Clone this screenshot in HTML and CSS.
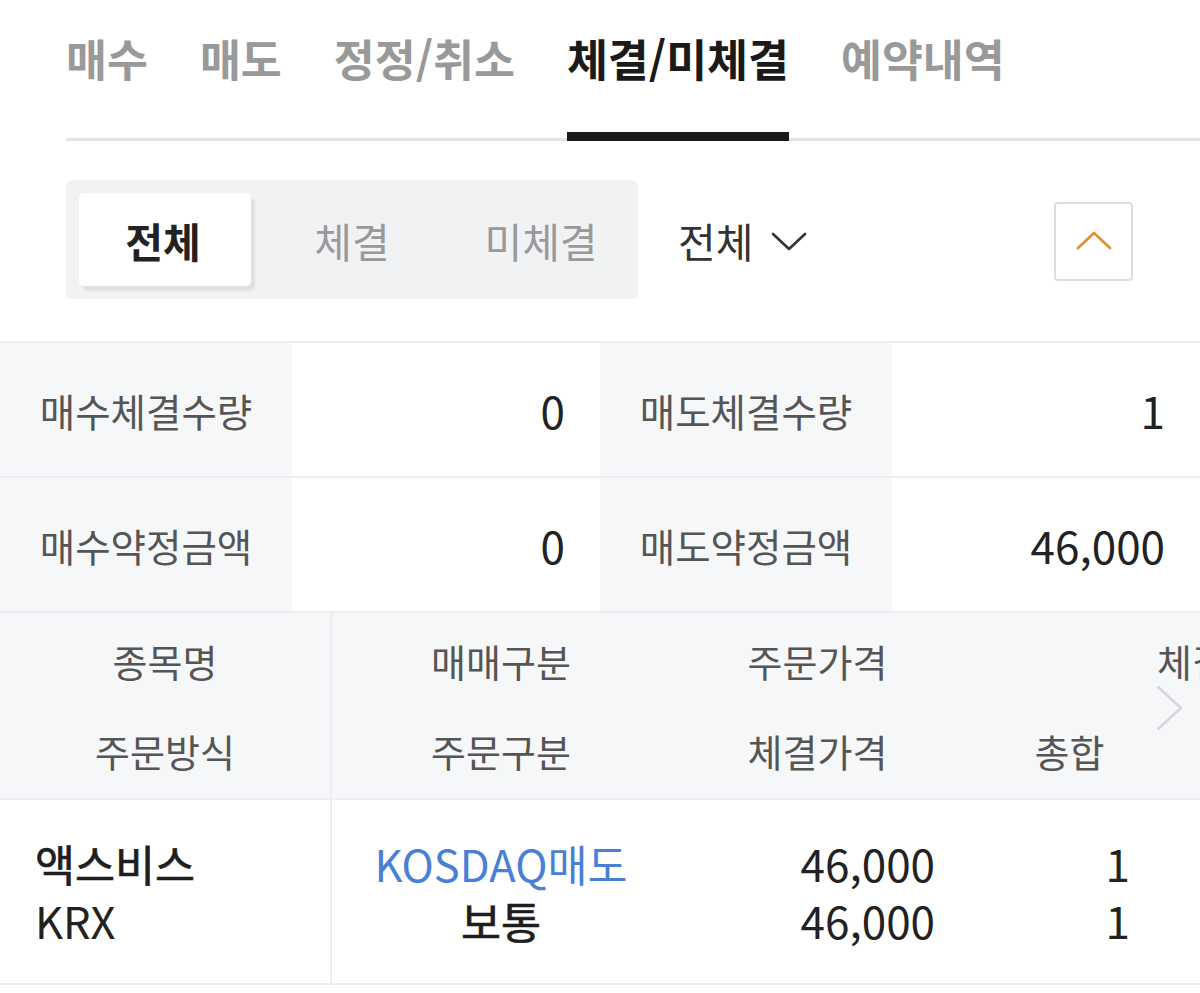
FILE: index.html
```html
<!DOCTYPE html>
<html lang="ko">
<head>
<meta charset="utf-8">
<title>체결/미체결</title>
<link rel="stylesheet" href="styles.css">
</head>
<body>
<div class="page">
  <nav class="tabs">
    <div class="tab">매수</div>
    <div class="tab">매도</div>
    <div class="tab">정정/취소</div>
    <div class="tab active">체결/미체결</div>
    <div class="tab">예약내역</div>
  </nav>

  <div class="filters">
    <div class="seg">
      <div class="seg-item on"><span class="seg-btn">전체</span></div>
      <div class="seg-item">체결</div>
      <div class="seg-item">미체결</div>
    </div>
    <div class="dropdown">
      <span>전체</span>
      <svg class="dd-icon" width="36" height="20" viewBox="0 0 36 20"><path d="M2 2 L18 17 L34 2" fill="none" stroke="#333" stroke-width="2.6" stroke-linecap="round" stroke-linejoin="round"/></svg>
    </div>
    <button class="up-btn" type="button">
      <svg width="36" height="20" viewBox="0 0 36 20"><path d="M2 18 L18 3 L34 18" fill="none" stroke="#e58f34" stroke-width="2.8" stroke-linecap="round" stroke-linejoin="round"/></svg>
    </button>
  </div>

  <div class="summary">
    <div class="s-label">매수체결수량</div>
    <div class="s-value">0</div>
    <div class="s-label">매도체결수량</div>
    <div class="s-value">1</div>
    <div class="s-label">매수약정금액</div>
    <div class="s-value">0</div>
    <div class="s-label">매도약정금액</div>
    <div class="s-value">46,000</div>
  </div>

  <div class="table">
    <div class="thead">
      <div class="cell c1 center"><span>종목명</span><span>주문방식</span></div>
      <div class="cell c2 center"><span>매매구분</span><span>주문구분</span></div>
      <div class="cell c3 center"><span>주문가격</span><span>체결가격</span></div>
      <div class="cell c4 center"><span>&nbsp;</span><span>총합</span></div>
      <div class="cell c5"><span>체결수량</span><span>&nbsp;</span></div>
      <svg class="more" width="30" height="46" viewBox="0 0 30 46"><path d="M3 2 L26 23 L3 44" fill="none" stroke="#d6d7da" stroke-width="2.4" stroke-linecap="round" stroke-linejoin="round"/></svg>
    </div>
    <div class="trow">
      <div class="cell c1 left"><span class="name">액스비스</span><span>KRX</span></div>
      <div class="cell c2 center"><span class="blue">KOSDAQ매도</span><span class="name">보통</span></div>
      <div class="cell c3 right"><span>46,000</span><span>46,000</span></div>
      <div class="cell c4 right"><span>1</span><span>1</span></div>
      <div class="cell c5"><span></span><span></span></div>
    </div>
  </div>
</div>
</body>
</html>
```

FILE: styles.css
```css
* { box-sizing: border-box; }
html, body { margin: 0; padding: 0; background: #fff; }
body {
  font-family: "Noto Sans CJK KR", "Noto Sans", sans-serif;
  color: #222;
  width: 1200px;
  overflow: hidden;
}
.page { width: 1200px; overflow: hidden; }

/* top tabs */
.tabs {
  display: flex;
  align-items: flex-start;
  gap: 52px;
  margin-left: 66px;
  border-bottom: 3px solid #e3e3e3;
  height: 141px;
}
.tab {
  height: 138px;
  padding-top: 27px;
  font-size: 44.5px;
  line-height: 62px;
  font-weight: 700;
  color: #999;
  white-space: nowrap;
}
.tab.active {
  color: #1a1a1a;
  height: 141px;
  margin-bottom: -3px;
  border-bottom: 9px solid #1a1a1a;
}

/* filters */
.filters {
  display: flex;
  align-items: center;
  padding: 39px 67px 0 66px;
}
.seg {
  display: grid;
  grid-template-columns: 182px 182px 182px;
  width: 572px;
  height: 119px;
  padding: 12px 13px;
  background: #f1f2f4;
  border-radius: 6px;
}
.seg-item {
  display: flex;
  align-items: center;
  justify-content: center;
  font-size: 41px;
  color: #999;
}
.seg-item:nth-child(3) { padding-left: 14px; }
.seg-item.on { justify-content: flex-start; }
.seg-btn {
  display: flex;
  align-items: center;
  justify-content: center;
  width: 172px;
  height: 93px;
  background: #fff;
  border-radius: 5px;
  box-shadow: 4px 5px 2px rgba(0, 0, 0, 0.07);
  font-weight: 700;
  color: #222;
  padding-right: 4px;
}
.dropdown {
  display: flex;
  align-items: center;
  gap: 18px;
  margin-left: 40px;
  font-size: 41px;
  color: #333;
}
.dd-icon { margin-top: 4px; }
.up-btn {
  margin-left: auto;
  margin-top: 4px;
  width: 79px;
  height: 79px;
  border: 2px solid #dedede;
  border-radius: 4px;
  background: #fff;
  display: flex;
  align-items: center;
  justify-content: center;
  padding: 0 0 4px;
}

/* summary */
.summary {
  margin-top: 42px;
  display: grid;
  grid-template-columns: 292px 308px 292px 308px;
  grid-auto-rows: 135px;
  border-top: 2px solid #eceef1;
}
.summary > div {
  display: flex;
  align-items: center;
  border-bottom: 2px solid #eceef1;
}
.s-label {
  justify-content: center;
  background: #f6f7f9;
  font-size: 38.5px;
  color: #555;
}
.s-value {
  justify-content: flex-end;
  padding-right: 35px;
  font-size: 44px;
  color: #222;
}

/* table */
.table { width: 1200px; overflow: hidden; }
.thead, .trow {
  position: relative;
  display: grid;
  grid-template-columns: 332px 338px 295px 195px 240px;
  border-bottom: 2px solid #eceef1;
}
.thead {
  height: 187px;
  background: #f6f7f9;
  font-size: 38px;
  color: #555;
}
.trow {
  height: 185px;
  background: #fff;
  font-size: 43.5px;
  color: #222;
}
.cell {
  display: flex;
  flex-direction: column;
  justify-content: center;
  white-space: nowrap;
}
.cell span { display: block; }
.c1 { border-right: 2px solid #eceef1; }
.thead .cell span { line-height: 90px; height: 90px; }
.trow .cell span { line-height: 57px; height: 57px; }
.center { align-items: center; }
.left { align-items: flex-start; padding-left: 35px; }
.right { align-items: flex-end; padding-right: 30px; }
.trow .c3, .trow .c4 { font-size: 44px; }
.thead .c4 { padding-left: 14px; }
.thead .c5 { padding-left: 0; margin-left: -3px; }
.blue { color: #4a7fd6; }
.name { font-weight: 400; color: #1e1e1e; -webkit-text-stroke: 0.7px #1e1e1e; }
.more { position: absolute; left: 1155px; top: 72px; }
```
